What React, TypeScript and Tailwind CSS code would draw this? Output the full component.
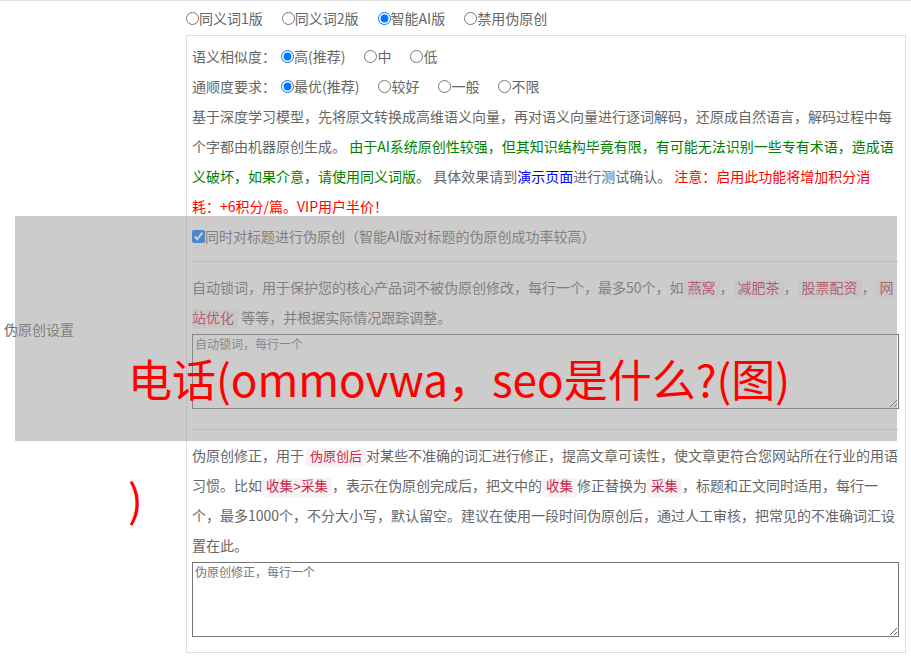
import React from 'react';

const Radio: React.FC<{ name: string; label: string; checked?: boolean }> = ({ name, label, checked }) => (
  <label className="flex items-center mr-[19px]">
    <input type="radio" name={name} defaultChecked={checked} className="w-[13px] h-[13px] m-0" />
    <span>{label}</span>
  </label>
);

const Code: React.FC<{ children: React.ReactNode; size?: string }> = ({ children, size = 'text-[14px]' }) => (
  <code
    className={`${size} leading-none px-[4px] py-[2px] rounded-[4px] bg-[#f9f2f4] text-[#c7254e] font-['Liberation_Mono','Noto_Sans_CJK_SC',monospace]`}
  >
    {children}
  </code>
);

const App: React.FC = () => {
  return (
    <div className="relative w-[911px] h-[658px] overflow-hidden bg-white text-[14px] text-[#666] font-['Noto_Sans_CJK_SC',sans-serif]">
      <div className="flex border-t border-[#ddd]">
        {/* label column */}
        <div className="w-[186px] flex items-center pl-[4px]">伪原创设置</div>

        {/* settings column */}
        <div className="pb-[5px]">
          <div className="h-[34px] flex items-center">
            <Radio name="mode" label="同义词1版" />
            <Radio name="mode" label="同义词2版" />
            <Radio name="mode" label="智能AI版" checked />
            <Radio name="mode" label="禁用伪原创" />
          </div>

          <div className="w-[720px] border border-[#ddd] pl-[5px] pr-[6px] pt-[6px] pb-[15px]">
            <div className="h-[29px] flex items-center">
              <span className="mr-[5px]">语义相似度：</span>
              <Radio name="sim" label="高(推荐)" checked />
              <Radio name="sim" label="中" />
              <Radio name="sim" label="低" />
            </div>
            <div className="h-[30px] flex items-center">
              <span className="mr-[5px]">通顺度要求：</span>
              <Radio name="flu" label="最优(推荐)" checked />
              <Radio name="flu" label="较好" />
              <Radio name="flu" label="一般" />
              <Radio name="flu" label="不限" />
            </div>

            <p className="leading-[30px] mr-[-6px] whitespace-nowrap">
              基于深度学习模型，先将原文转换成高维语义向量，再对语义向量进行逐词解码，还原成自然语言，解码过程中每
              <br />
              个字都由机器原创生成。{' '}
              <span className="text-[#008000]">
                由于AI系统原创性较强，但其知识结构毕竟有限，有可能无法识别一些专有术语，造成语
                <br />
                义破坏，如果介意，请使用同义词版。
              </span>{' '}
              具体效果请到<a className="text-[#0000ff]">演示页面</a>进行测试确认。{' '}
              <span className="text-[#ff0000]">
                注意：启用此功能将增加积分消
                <br />
                耗：+6积分/篇。VIP用户半价！
              </span>
            </p>

            <label className="h-[30px] flex items-center">
              <input type="checkbox" defaultChecked className="w-[13px] h-[13px] m-0" />
              <span>同时对标题进行伪原创（智能AI版对标题的伪原创成功率较高）</span>
            </label>

            <div className="my-[10px] border-t border-[#ddd]" />

            <p className="leading-[30px] mr-[-6px] whitespace-nowrap">
              自动锁词，用于保护您的核心产品词不被伪原创修改，每行一个，最多50个，如<Code>燕窝</Code>，<Code>减肥茶</Code>，<Code>股票配资</Code>，<Code>网<br />站优化</Code> 等等，并根据实际情况跟踪调整。
            </p>
            <textarea
              placeholder="自动锁词，每行一个"
              className="block mt-[2px] w-full h-[75px] border border-[#767676] px-[2px] py-[1px] text-[12px] leading-[16px] placeholder:text-[#757575]"
            />

            <div className="mt-[20px] mb-[10px] border-t border-[#ddd]" />

            <p className="leading-[30px] mr-[-6px] whitespace-nowrap">
              伪原创修正，用于<span className="ml-[2px]" /><Code size="text-[13px]">伪原创后</Code>对某些不准确的词汇进行修正，提高文章可读性，使文章更符合您网站所在行业的用语
              <br />
              习惯。比如<Code size="text-[13.5px]">收集&gt;采集</Code>，表示在伪原创完成后，把文中的<Code size="text-[13.5px]">收集</Code>修正替换为<Code size="text-[13.5px]">采集</Code>，标题和正文同时适用，每行一
              <br />
              个，最多1000个，不分大小写，默认留空。建议在使用一段时间伪原创后，通过人工审核，把常见的不准确词汇设
              <br />
              置在此。
            </p>
            <textarea
              placeholder="伪原创修正，每行一个"
              className="block mt-[2px] w-full h-[75px] border border-[#767676] px-[2px] py-[1px] text-[12px] leading-[16px] placeholder:text-[#757575]"
            />
          </div>
        </div>
      </div>

      {/* grey overlay */}
      <div className="absolute left-[15px] top-[216px] w-[882px] h-[225px] bg-[#999]/50 pointer-events-none" />

      {/* overlay title */}
      <div className="absolute left-[128px] top-[318px] text-[44px] leading-[120px] text-[#ff0000] whitespace-nowrap pointer-events-none">
        电话(ommovwa，seo是什么?(图)
        <br />)
      </div>
    </div>
  );
};

export default App;
